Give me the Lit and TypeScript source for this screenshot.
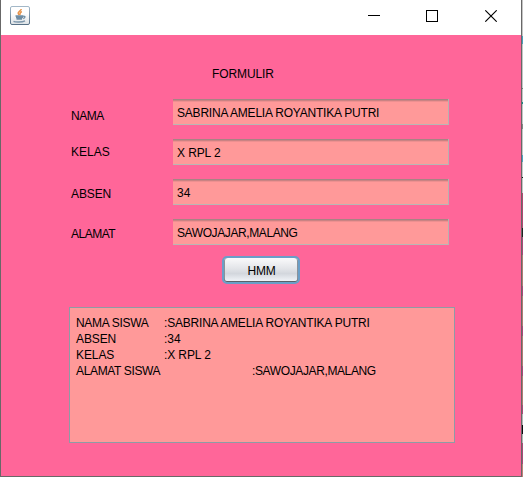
import { LitElement, html, css } from "lit";
import { customElement, property } from "lit/decorators.js";

@customElement("title-bar")
class TitleBar extends LitElement {
  static styles = css`
    :host { display: flex; height: 35px; background: #fff; align-items: flex-start; justify-content: space-between; }
    .logo { margin: 6px 0 0 9px; display: block; }
    .controls { margin: 10px 24px 0 0; display: block; }
  `;
  render() {
    return html`
      <svg class="logo" width="20" height="19" viewBox="0 0 20 19" fill="none">
        <defs><linearGradient id="g" x2="0" y2="1"><stop stop-color="#a3b8c8" /><stop offset="1" stop-color="#587086" /></linearGradient>
        <linearGradient id="f" x2="0" y2="1"><stop offset=".4" stop-color="#fff" /><stop offset="1" stop-color="#dce1e5" /></linearGradient></defs>
        <rect x=".5" y=".5" width="19" height="18" rx="1.5" fill="url(#f)" stroke="url(#g)" />
        <path d="M11.300 3C11 5 7.500 5.500 8.200 7.500L9.200 9M11.800 5.500C9 7 10.800 7.500 9.700 9" stroke="#e8944a" stroke-width="1.500" />
        <path d="M5.500 10h8M6 11.500h7M6.500 13h5.500M13.500 10.500c2-.8 2 1.500-.3 2" stroke="#6f8da4" stroke-width="1.300" />
        <path d="M3.500 15.300c2 1 8.500 1 11.500-.5" stroke="#7c96ab" stroke-width="1.300" />
      </svg>
      <svg class="controls" width="130" height="12" viewBox="0 0 130 12" fill="none" stroke="#000">
        <path d="M1 5.500h12" />
        <rect x="59.500" y=".5" width="11" height="11" />
        <path d="M118.300.3l11.400 11.400M129.700.3l-11.400 11.400" stroke-width="1.100" />
      </svg>`;
  }
}

@customElement("form-field")
class FormField extends LitElement {
  @property() label = "";
  @property() value = "";
  @property({ type: Number }) shift = 0;
  @property({ type: Number }) labelTracking = 0;
  @property({ type: Number }) valueTracking = 0;
  static styles = css`
    :host { display: flex; height: 26px; }
    .label { width: 102px; flex: none; line-height: 14px; }
    .value { box-sizing: border-box; width: 276px; height: 26px; padding-left: 4px; line-height: 14px; padding-top: 7px;
      background: linear-gradient(#a68484 0 1px, #c98383 1px 2px, #ed9090 2px 3px, #f99 3px) no-repeat border-box;
      border-right: 1px solid #b8b0b0; border-bottom: 1px solid #b8b8b4; white-space: nowrap; }
  `;
  render() {
    return html`<span class="label" style="padding-top:${this.shift}px;letter-spacing:${this.labelTracking}px">${this.label}</span>
      <div class="value" style="letter-spacing:${this.valueTracking}px">${this.value}</div>`;
  }
}

const fields = [
  { label: "NAMA", value: "SABRINA AMELIA ROYANTIKA PUTRI", shift: 10, lt: -0.5, vt: -0.21 },
  { label: "KELAS", value: "X RPL 2", shift: 6, lt: 0, vt: -0.1 },
  { label: "ABSEN", value: "34", shift: 8, lt: -0.1, vt: 0 },
  { label: "ALAMAT", value: "SAWOJAJAR,MALANG", shift: 8, lt: -0.5, vt: -0.4 },
];

const rows = [
  { name: "NAMA SISWA", value: ":SABRINA AMELIA ROYANTIKA PUTRI", tabs: 1, nt: -0.3, vt: -0.2 },
  { name: "ABSEN", value: ":34", tabs: 1, nt: -0.1, vt: 0 },
  { name: "KELAS", value: ":X RPL 2", tabs: 1, nt: -0.1, vt: -0.1 },
  { name: "ALAMAT SISWA", value: ":SAWOJAJAR,MALANG", tabs: 2, nt: -0.35, vt: -0.38 },
];
const TAB = 88;

@customElement("app-root")
class AppRoot extends LitElement {
  static styles = css`
    :host { display: flex; width: 523px; height: 477px; overflow: hidden; color: #000;
      font: 12px "Liberation Sans", Arial, sans-serif; }
    .window { box-sizing: border-box; width: 522px; height: 477px; border: solid #686868; border-width: 0 1px 1px;
      background: #f69; }
    .edge { width: 1px; height: 477px;
      background: linear-gradient(#c4c4c4 0 36px, #4c9cba 36px 44px, #c4c4c4 44px 88px, #777 88px 89px, #c4c4c4 89px 102px, #168a86 102px 104px,
        #c4c4c4 104px 124px, #858585 124px 129px, #c4c4c4 129px 155px, #4f9fc0 155px 162px, #c8c8c8 162px 177px, #111 177px 178px,
        #c4c4c4 178px 193px, #b04a72 193px 228px, #222 228px 237px, #a84c78 237px 255px, #b07c74 255px 286px, #a84c78 286px 296px,
        #b07c74 296px 326px, #a84c78 326px 336px, #b07c74 336px 366px, #a84c78 366px 376px, #b07c74 376px 405px, #a84c78 405px 414px,
        #b4b4b4 414px 425px, #100810 425px 434px, #b4b4b4 434px 443px, #a84c78 443px 464px, #c08078 464px); }
    .heading { margin: 32px 0 0 211px; line-height: 14px; height: 14px; letter-spacing: -.1px; }
    .fields { display: flex; flex-direction: column; gap: 14px; margin: 18px 0 0 70px; }
    .button { box-sizing: border-box; display: block; width: 78px; height: 28px; margin: 11px 0 0 221px; padding: 2px 0 0 1px;
      border: 2px solid #6a9fc8; border-radius: 5px; font: inherit; color: #000; letter-spacing: -.2px;
      background: linear-gradient(#fafafb, #e2e4e8 45%, #d3d7dd 65%, #f4f7fb);
      box-shadow: inset 0 -1px #5b6168, inset 1px 0 #8b929a, inset -1px 0 #8b929a; }
    .output { box-sizing: border-box; width: 386px; height: 136px; margin: 23px 0 0 68px; padding: 7px 0 0 6px;
      border: 1px solid #8f9aa5; background: #f99; line-height: 16px; white-space: nowrap; }
    .row { display: flex; height: 16px; }
    .name { flex: none; }
  `;
  render() {
    return html`
      <div class="window">
        <title-bar></title-bar>
        <div class="heading">FORMULIR</div>
        <div class="fields">${fields.map((f) => html`<form-field .label=${f.label} .value=${f.value} .shift=${f.shift}
          .labelTracking=${f.lt} .valueTracking=${f.vt}></form-field>`)}</div>
        <button class="button">HMM</button>
        <div class="output">${rows.map((r) => html`<div class="row"><span class="name"
          style="width:${r.tabs * TAB}px;letter-spacing:${r.nt}px">${r.name}</span><span
          style="letter-spacing:${r.vt}px">${r.value}</span></div>`)}</div>
      </div>
      <div class="edge"></div>`;
  }
}
